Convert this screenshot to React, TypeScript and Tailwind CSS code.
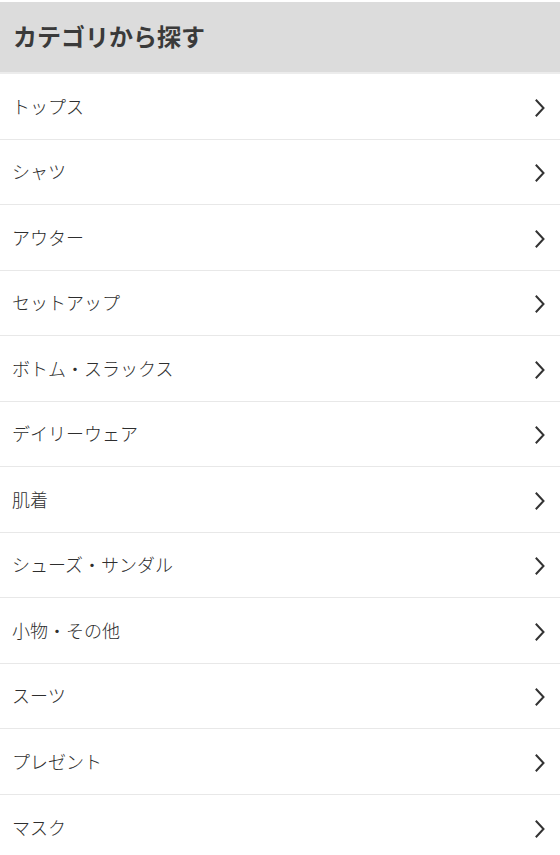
const categories = [
  "トップス",
  "シャツ",
  "アウター",
  "セットアップ",
  "ボトム・スラックス",
  "デイリーウェア",
  "肌着",
  "シューズ・サンダル",
  "小物・その他",
  "スーツ",
  "プレゼント",
  "マスク",
];

const Chevron = () => (
  <svg
    width="12"
    height="18"
    viewBox="0 0 12 18"
    fill="none"
    stroke="#333"
    strokeWidth="2"
    strokeLinecap="square"
    strokeLinejoin="miter"
  >
    <path d="M2.5 1.5L9.5 9L2.5 16.5" />
  </svg>
);

export default function App() {
  return (
    <div
      className="w-[560px] bg-white pt-[2px] text-[#333]"
      style={{ fontFamily: '"Noto Sans CJK JP", "Noto Sans", sans-serif' }}
    >
      <h2 className="h-[72px] bg-[#dcdcdc] border-b-2 border-[#ececec] flex items-center px-[13px] pb-[2px] text-[24px] font-bold text-[#3a3a3a]">
        カテゴリから探す
      </h2>
      <ul>
        {categories.map((name, i) => (
          <li
            key={name}
            className={`h-[65.5px] flex items-center justify-between pl-[12px] pr-[14px] ${
              i < categories.length - 1 ? "border-b border-[#e8e8e8]" : ""
            }`}
          >
            <span className="text-[18px] font-light text-[#2e2e2e]">{name}</span>
            <span className="mt-[3px]">
              <Chevron />
            </span>
          </li>
        ))}
      </ul>
    </div>
  );
}
